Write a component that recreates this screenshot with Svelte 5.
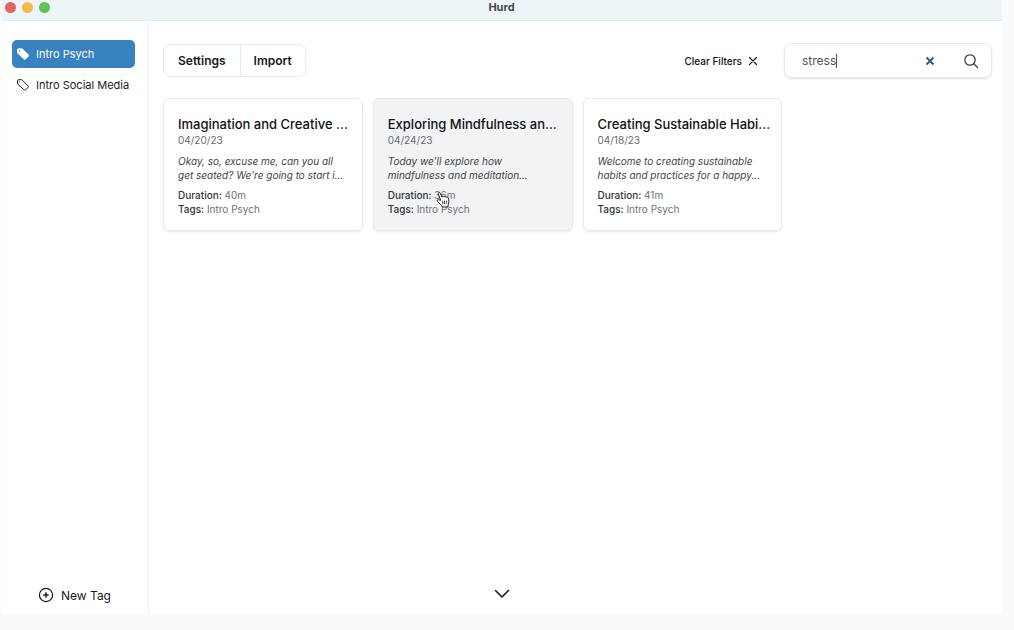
<script>
  const tags = [
    { name: 'Intro Psych', active: true },
    { name: 'Intro Social Media', active: false }
  ];

  const lectures = [
    {
      title: 'Imagination and Creative ...',
      date: '04/20/23',
      lines: ['Okay, so, excuse me, can you all', "get seated? We're going to start i..."],
      duration: '40m',
      tag: 'Intro Psych'
    },
    {
      title: 'Exploring Mindfulness an...',
      date: '04/24/23',
      lines: ["Today we'll explore how", 'mindfulness and meditation...'],
      duration: '36m',
      tag: 'Intro Psych',
      hovered: true
    },
    {
      title: 'Creating Sustainable Habi...',
      date: '04/18/23',
      lines: ['Welcome to creating sustainable', 'habits and practices for a happy...'],
      duration: '41m',
      tag: 'Intro Psych'
    }
  ];

  let query = $state('stress');
</script>

<div class="window">
  <header class="titlebar">
    <div class="lights">
      <span class="light red"></span>
      <span class="light yellow"></span>
      <span class="light green"></span>
    </div>
    <h1>Hurd</h1>
  </header>

  <div class="body">
    <aside>
      <nav>
        {#each tags as tag}
          <a href="#tag" class="tag" class:active={tag.active}>
            <svg width="14" height="14" viewBox="0 0 14 14" aria-hidden="true">
              {#if tag.active}
                <path fill="currentColor" fill-rule="evenodd" d="M1 3C1 1.900 1.900 1.200 3 1.200h2.200c.6 0 1 .2 1.400.6l5.700 5.500c.8.8.8 1.700 0 2.500l-2.300 2.300c-.8.8-1.700.8-2.500 0L1.600 6.600C1.200 6.200 1 5.800 1 5.200zM3.500 2.900a.8.8 0 1 0 0 1.600.8.8 0 0 0 0-1.600z" />
              {:else}
                <path fill="none" stroke="currentColor" stroke-linejoin="round" d="M1.500 3.100c0-.9.600-1.400 1.500-1.400h2.100c.5 0 .8.1 1.100.4l5.700 5.600c.6.6.6 1.200 0 1.800l-2.200 2.200c-.6.6-1.200.6-1.800 0L1.900 6.300c-.3-.3-.4-.6-.4-1.100z" />
                <circle cx="3.600" cy="3.800" r=".5" fill="currentColor" />
              {/if}
            </svg>
            {tag.name}
          </a>
        {/each}
      </nav>
      <button class="new-tag">
        <svg width="16" height="16" viewBox="0 0 16 16" fill="none" stroke="currentColor" stroke-width="1.200" stroke-linecap="round" aria-hidden="true">
          <circle cx="8" cy="8" r="6.600" />
          <path d="M8 5.800v4.400M5.800 8h4.400" stroke-width="1.400" />
        </svg>
        New Tag
      </button>
    </aside>

    <main>
      <div class="toolbar">
        <div class="group">
          <button>Settings</button>
          <button>Import</button>
        </div>
        <div class="filters">
          <button class="clear">
            Clear Filters
            <svg width="10" height="10" viewBox="0 0 10 10" fill="none" stroke="currentColor" stroke-width="1.100" stroke-linecap="round" aria-hidden="true">
              <path d="M1.500 1.500l7 7M8.500 1.500l-7 7" />
            </svg>
          </button>
          <div class="search">
            <div class="field">
              <input type="text" aria-label="Search" bind:value={query} />
              <span class="caret" aria-hidden="true"></span>
            </div>
            <button class="icon reset" aria-label="Clear search" onclick={() => (query = '')}>
              <svg width="10" height="10" viewBox="0 0 10 10" fill="none" stroke="currentColor" stroke-width="1.800" aria-hidden="true">
                <path d="M1.500 1.500l7 7M8.500 1.500l-7 7" />
              </svg>
            </button>
            <button class="icon" aria-label="Search">
              <svg width="16" height="16" viewBox="0 0 16 16" fill="none" stroke="currentColor" stroke-width="1.300" stroke-linecap="round" aria-hidden="true">
                <circle cx="7" cy="7" r="5.200" />
                <path d="M10.800 10.800l3.700 3.700" />
              </svg>
            </button>
          </div>
        </div>
      </div>

      <section class="cards">
        {#each lectures as item}
          <article class="card" class:hovered={item.hovered}>
            <h2>{item.title}</h2>
            <p class="date">{item.date}</p>
            <p class="excerpt">
              {#each item.lines as line}<span>{line}</span>{/each}
            </p>
            <p class="meta"><b>Duration:</b> {item.duration}</p>
            <p class="meta"><b>Tags:</b> {item.tag}</p>
            {#if item.hovered}
              <svg class="pointer" width="14" height="17" viewBox="0 0 14 17" aria-hidden="true">
                <path fill="#fff" stroke="#222" stroke-linejoin="round" d="M4.700 9.300L2.300 3.100C1.800 1.500 3.600.8 4.200 2.200L6 6.200c0-1.300 1.800-1.400 2.100-.1.300-1 1.800-.9 2.100.3.500-.8 1.900-.5 2.100.7.500 2.100.9 4.400-.1 6.600l-.3 2.300H6.500C5.700 14 3.400 12.500 1.400 10.400c-.9-1 .2-2.100 1.300-1.600z" />
                <path fill="none" stroke="#333" stroke-width=".9" d="M6.700 9.700v3.200M8.500 9.700v3.200M10.300 9.700v3.200" />
              </svg>
            {/if}
          </article>
        {/each}
      </section>
    </main>
  </div>

  <button class="more" aria-label="Show more">
    <svg width="16" height="10" viewBox="0 0 16 10" fill="none" stroke="currentColor" stroke-width="1.600" stroke-linecap="round" stroke-linejoin="round" aria-hidden="true">
      <path d="M1.500 1.500L8 8l6.500-6.500" />
    </svg>
  </button>
</div>

<style>
  :global(body) {
    background: #f8fafc;
    font-family: Inter, 'Liberation Sans', sans-serif;
    color: #18181b;
  }

  * {
    box-sizing: border-box;
  }

  h1,
  h2,
  p {
    margin: 0;
  }

  button {
    display: flex;
    align-items: center;
    padding: 0;
    border: 0;
    background: none;
    color: inherit;
    font: inherit;
  }

  svg {
    display: block;
    flex: none;
  }

  .window {
    position: relative;
    display: flex;
    flex-direction: column;
    min-height: calc(100vh - 16px);
    margin: 0 12px 16px 1px;
    background: #fff;
  }

  .titlebar {
    display: grid;
    grid-template-columns: 1fr auto 1fr;
    height: 21px;
    background: #eef5f9;
    border-bottom: 1px solid #e6eaed;
  }

  .lights {
    display: flex;
    gap: 6px;
    padding: 2px 4px;
  }

  .light {
    width: 11px;
    height: 11px;
    border-radius: 50%;
  }

  .red {
    background: #e0655e;
  }

  .yellow {
    background: #f0bc4e;
  }

  .green {
    background: #5fc454;
  }

  h1 {
    font-size: 11px;
    line-height: 15px;
    font-weight: 700;
    color: #44474a;
  }

  .body {
    display: flex;
    flex: 1;
  }

  aside {
    display: flex;
    flex-direction: column;
    justify-content: space-between;
    width: 148px;
    padding: 19px 13px 8px 11px;
    border-right: 1px solid #f0f1f3;
  }

  nav {
    display: flex;
    flex-direction: column;
    gap: 3px;
  }

  .tag {
    display: flex;
    align-items: center;
    gap: 6px;
    height: 28px;
    padding: 0 4px;
    border-radius: 5px;
    font-size: 11px;
    white-space: nowrap;
    color: inherit;
    text-decoration: none;
  }

  .tag.active {
    background: #3782bf;
    color: #fff;
  }

  .new-tag {
    gap: 7px;
    height: 22px;
    padding-left: 26px;
    font-size: 12px;
  }

  main {
    flex: 1;
    min-width: 0;
    padding: 22px 10px 22px 14px;
  }

  .toolbar {
    display: flex;
    justify-content: space-between;
    align-items: center;
    margin-bottom: 20px;
  }

  .group {
    display: flex;
    height: 33px;
    border: 1px solid #e9eaec;
    border-radius: 7px;
  }

  .group button {
    padding: 0 14px;
    font-size: 12px;
    font-weight: 600;
  }

  .group button + button {
    padding: 0 13px;
    border-left: 1px solid #e9eaec;
  }

  .filters {
    display: flex;
    align-items: center;
    gap: 26px;
  }

  .clear {
    gap: 6px;
    font-size: 10px;
    font-weight: 500;
    color: #111;
  }

  .search {
    display: flex;
    align-items: center;
    gap: 24px;
    width: 208px;
    height: 35px;
    padding: 0 12px 0 17px;
    border: 1px solid #e8e9eb;
    border-radius: 7px;
    box-shadow: 0 1px 2px #0000001f;
  }

  .field {
    position: relative;
    flex: 1;
    min-width: 0;
  }

  input {
    display: block;
    width: 100%;
    padding: 0;
    border: 0;
    outline: 0;
    background: none;
    font: 12px/18px Inter, 'Liberation Sans', sans-serif;
    color: #52555a;
  }

  .caret {
    position: absolute;
    left: 34px;
    top: 2px;
    width: 1px;
    height: 14px;
    background: #555;
  }

  .icon {
    color: #3f3f46;
  }

  .reset {
    margin-right: 4px;
    color: #2f5291;
  }

  .cards {
    display: grid;
    grid-template-columns: repeat(auto-fill, minmax(190px, 1fr));
    gap: 10px;
  }

  .card {
    position: relative;
    padding: 16px 14px 14px;
    border: 1px solid #e9eaec;
    border-radius: 6px;
    box-shadow: 0 1px 2px #00000017;
    white-space: nowrap;
  }

  .card.hovered {
    background: #f2f3f5;
  }

  h2 {
    font-size: 13px;
    line-height: 18px;
    font-weight: 500;
    color: #111114;
  }

  .date {
    margin-bottom: 6px;
    font-size: 10px;
    line-height: 15px;
    color: #6b6b70;
  }

  .excerpt {
    margin-bottom: 6px;
    font-size: 10px;
    line-height: 14px;
    font-style: italic;
    color: #3f3f46;
  }

  .excerpt span {
    display: block;
  }

  .meta {
    font-size: 10px;
    line-height: 14px;
    color: #71717a;
  }

  .meta b {
    font-weight: 500;
    color: #34343a;
  }

  .pointer {
    position: absolute;
    left: 62px;
    top: 92px;
  }

  .more {
    position: absolute;
    left: 50%;
    bottom: 15px;
    transform: translateX(-50%);
  }
</style>
